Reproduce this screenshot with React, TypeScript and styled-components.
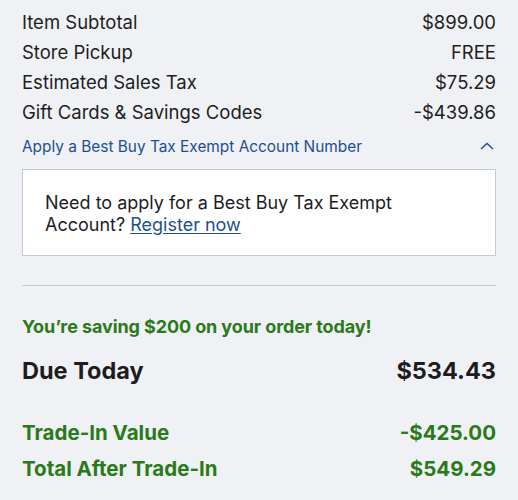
import styled, { createGlobalStyle } from 'styled-components';

const GlobalStyle = createGlobalStyle`
  html, body {
    margin: 0;
    padding: 0;
    background: #f0f1f4;
  }
  body {
    font-family: Inter, "Liberation Sans", sans-serif;
    color: #1d1d1f;
  }
`;

const Summary = styled.section`
  padding: 7px 22px 0;
  background: #f0f1f4;
  height: 500px;
  box-sizing: border-box;
`;

const Row = styled.div<{ $size?: number; $height?: number; $bold?: boolean; $green?: boolean }>`
  display: flex;
  justify-content: space-between;
  align-items: center;
  height: ${p => p.$height ?? 30}px;
  font-size: ${p => p.$size ?? 18.5}px;
  font-weight: ${p => (p.$bold ? 700 : 400)};
  color: ${p => (p.$green ? '#2a7a1b' : '#1d1d1f')};
`;

const ToggleRow = styled.button`
  display: flex;
  justify-content: space-between;
  align-items: center;
  width: 100%;
  height: 30px;
  margin-top: 4px;
  padding: 0;
  border: 0;
  background: none;
  color: #1d4f91;
  font-family: inherit;
  font-size: 15.4px;
  cursor: pointer;
`;

const Chevron = styled.svg`
  width: 14px;
  height: 8px;
  margin-right: 2px;
`;

const InfoBox = styled.div`
  margin-top: 8px;
  padding: 22px 22px 19px;
  background: #fff;
  border: 1px solid #c5cbd5;
  font-size: 18px;
  line-height: 22px;
  color: #1d1d1f;
`;

const Link = styled.a`
  color: #1d4f91;
  text-decoration: underline;
  text-underline-offset: 2px;
`;

const Divider = styled.hr`
  margin: 29px 0 0;
  border: 0;
  border-top: 1px solid #c5cbd5;
`;

const Savings = styled.p`
  margin: 31px 0 0;
  font-size: 18px;
  line-height: 20px;
  font-weight: 700;
  letter-spacing: -0.1px;
  color: #2a7a1b;
`;

const Gap = styled.div<{ $h: number }>`
  height: ${p => p.$h}px;
`;

export default function App() {
  return (
    <>
      <GlobalStyle />
      <Summary>
        <Row><span>Item Subtotal</span><span>$899.00</span></Row>
        <Row><span>Store Pickup</span><span>FREE</span></Row>
        <Row><span>Estimated Sales Tax</span><span>$75.29</span></Row>
        <Row><span>Gift Cards &amp; Savings Codes</span><span>-$439.86</span></Row>
        <ToggleRow>
          <span>Apply a Best Buy Tax Exempt Account Number</span>
          <Chevron viewBox="0 0 14 8" fill="none">
            <path d="M1 7L7 1.5L13 7" stroke="#1d4f91" strokeWidth="1.4" />
          </Chevron>
        </ToggleRow>
        <InfoBox>
          Need to apply for a Best Buy Tax Exempt Account? <Link href="#">Register now</Link>
        </InfoBox>
        <Divider />
        <Savings>You’re saving $200 on your order today!</Savings>
        <Gap $h={15} />
        <Row $size={23.5} $height={36} $bold><span>Due Today</span><span>$534.43</span></Row>
        <Gap $h={26} />
        <Row $size={20.5} $height={36} $bold $green><span>Trade-In Value</span><span>-$425.00</span></Row>
        <Row $size={20.5} $height={36} $bold $green><span>Total After Trade-In</span><span>$549.29</span></Row>
      </Summary>
    </>
  );
}
